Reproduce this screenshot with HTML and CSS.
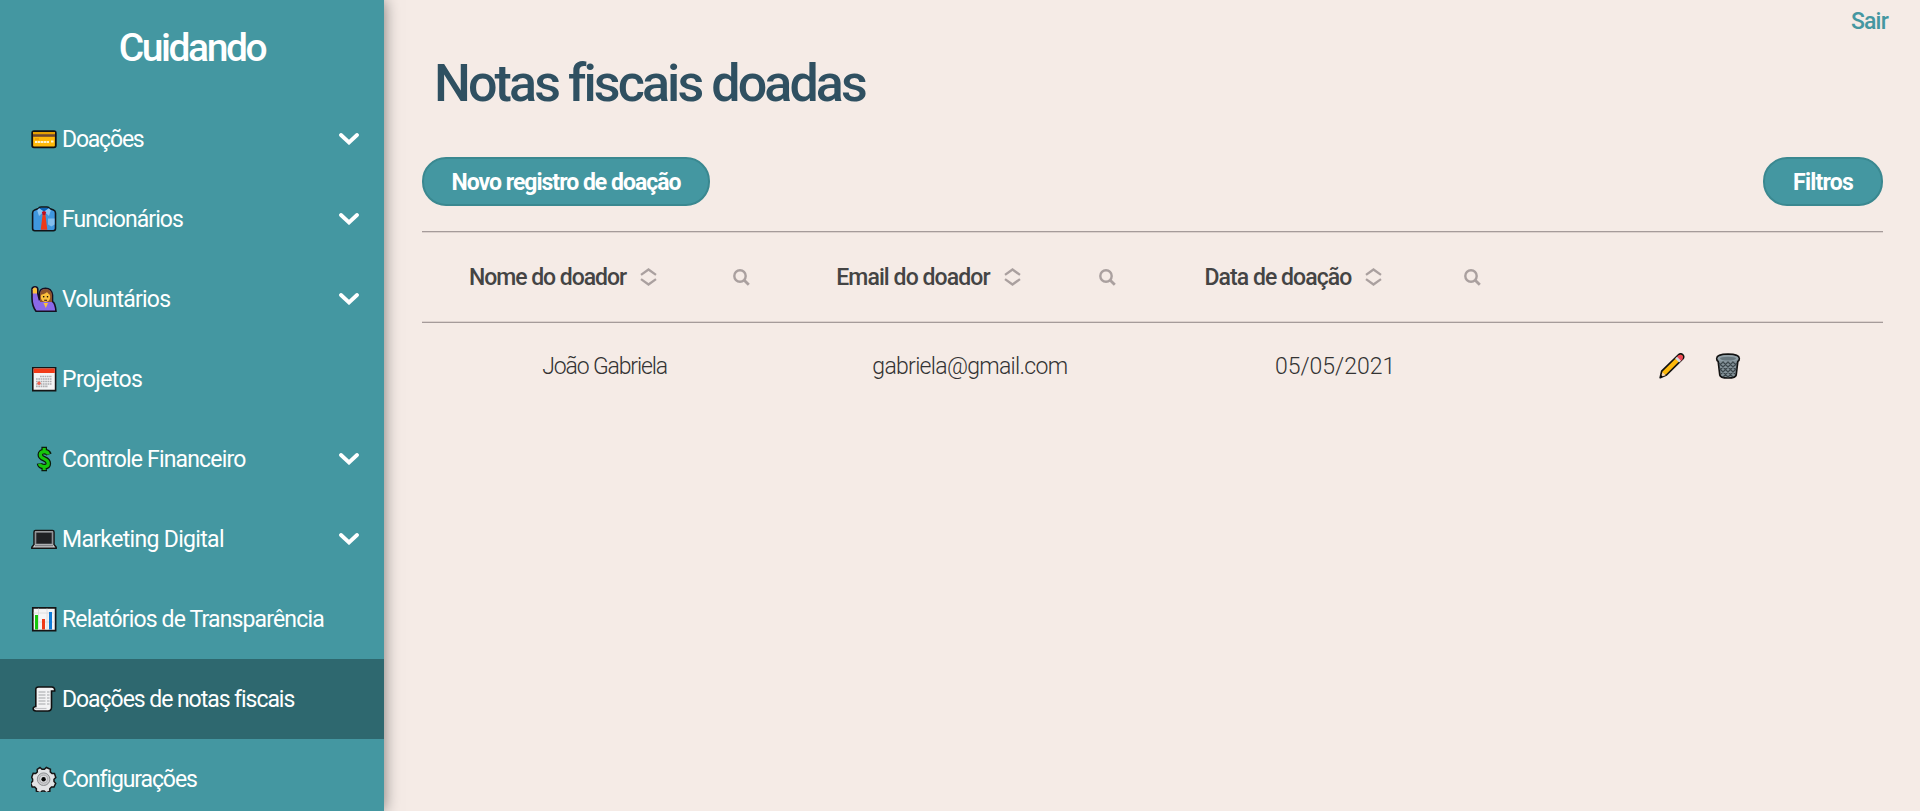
FILE: index.html
```html
<!DOCTYPE html>
<html lang="pt-BR">
<head>
<meta charset="utf-8">
<title>Cuidando</title>
<link rel="stylesheet" href="styles.css">
</head>
<body>
<svg width="0" height="0" class="defs">
  <symbol id="chevron" viewBox="0 0 20 12"><path d="M2 2l8 7.500L18 2" fill="none" stroke="#fff" stroke-width="3.800" stroke-linecap="round" stroke-linejoin="miter"/></symbol>
  <symbol id="sort" viewBox="0 0 17 18"><path d="M1 6.900l7.500-5.400 7.500 5.400M1 11.100l7.500 5.400 7.500-5.400" fill="none" stroke="#aaa09f" stroke-width="2.300"/></symbol>
  <symbol id="search" viewBox="0 0 17 17"><circle cx="7" cy="7" r="5.7" fill="none" stroke="#aaa09f" stroke-width="2.4"/><path d="M11.2 11.2l4.6 4.6" stroke="#aaa09f" stroke-width="2.8"/></symbol>
</svg>
<div class="app">
  <aside class="sidebar">
    <h2 class="brand"><span>Cuidando</span></h2>
    <nav>
      <a class="item"><svg class="ico" viewBox="0 0 26 26"><rect x="1.2" y="5.2" width="23.6" height="16.2" rx="1.8" fill="#ffb90a" stroke="#111" stroke-width="1.8"/><path d="M2 6h22v2H2z" fill="#e8a000"/><path d="M2 8.2h22v2.6H2z" fill="#6d4631"/><path d="M4 13h4" stroke="#e58a00" stroke-width="1"/><path d="M4 16h14M20 15.6h3" stroke="#fff3cf" stroke-width="2" stroke-dasharray="2.5 .5"/></svg><span class="t t1">Doações</span><svg class="chev"><use href="#chevron"/></svg></a>
      <a class="item"><svg class="ico" viewBox="0 0 26 26"><path d="M7.5 2.5Q8 1 10 1h6q2 0 2.500 1.500l4 1.500Q24.500 4.700 24.500 7v15.500q0 2.200-2.200 2.200H3.800q-2.200 0-2.200-2.200V7q0-2.300 2-3z" fill="#3f97df" stroke="#101418" stroke-width="1.6"/><path d="M8 2h10l-5 5z" fill="#0b63b8"/><path d="M8 2.300L6.200 4.500 8 10l5-4.500zM18 2.300l1.800 2.200L18 10l-5-4.500z" fill="#8cc5f2"/><path d="M11.700 8h2.600l2 15.800H9.700z" fill="#ef3a19"/><path d="M10.800 6l2.200-1 2.200 1-1 3h-2.400z" fill="#c00d20"/><path d="M17 12.500h6.500v6l-3.200 2-3.300-2z" fill="#83bdec"/></svg><span class="t t2">Funcionários</span><svg class="chev"><use href="#chevron"/></svg></a>
      <a class="item"><svg class="ico" viewBox="0 0 26 26"><path d="M1 3Q1.500.8 4 .8t2.800 2.400v4.500l1.700 6.500V8q0-5.800 6-5.800T21.500 9v6.500q2.800 1.500 3.500 9.700H5Q1 20 1 12z" fill="#8a69e8" stroke="#151020" stroke-width="1.600"/><path d="M1.800 7.500V3.200Q2.200 1.600 4 1.600T6 3.400v4.100z" fill="#fdc13c"/><path d="M9 16V8.500Q9 3 14.500 3T21 8.500V16z" fill="#8e542b"/><ellipse cx="14.500" cy="11" rx="4.700" ry="5" fill="#fdc13c"/><path d="M10 8.500Q15 8 16 5.500q1 2.500 3.500 3V6q-2-2-5-2t-4.500 2z" fill="#8e542b"/><path d="M12.500 17h4.500l-2.200 5z" fill="#fdc13c"/><circle cx="12.700" cy="10.800" r=".8"/><circle cx="16.500" cy="10.800" r=".8"/><path d="M13.200 13.700h2.800v1.200h-2.800z" fill="#3a2010"/></svg><span class="t t3">Voluntários</span><svg class="chev"><use href="#chevron"/></svg></a>
      <a class="item"><svg class="ico" viewBox="0 0 26 26"><path d="M1.800 1.800h22.800v22.800H1.800z" fill="#f3f3f4" stroke="#151515" stroke-width="1.600"/><path d="M2.600 2.500h21.200V7H2.600z" fill="#f13b18"/><g stroke="#adadb0" stroke-width="1.700" stroke-dasharray="1.700 .6"><path d="M9 10.500h12M5 13h16M5 15.500h16M5 18h16M5 20.300h12"/></g><circle cx="8" cy="17.300" r="1.700" fill="#ee6250"/></svg><span class="t t4">Projetos</span></a>
      <a class="item"><svg class="ico" viewBox="0 0 26 26"><g fill="none" stroke-linejoin="miter"><path d="M18 8.500Q17 5.600 13.300 5.600q-4 0-4 3.100 0 2.500 4 4.200t4 4.500q0 3.200-4.200 3.200-4.100 0-4.600-3.300M13.200.8v4.700M13.200 20.500v4.700" stroke="#0a1a0a" stroke-width="5.600"/><path d="M17.400 8.500Q17 5.600 13.300 5.600q-4 0-4 3.100 0 2.500 4 4.200t4 4.500q0 3.200-4.200 3.200-4.100 0-4.600-2.800M13.200 2v4M13.200 20.500V24" stroke="#16c60c" stroke-width="3.200"/></g></svg><span class="t t5">Controle Financeiro</span><svg class="chev"><use href="#chevron"/></svg></a>
      <a class="item"><svg class="ico" viewBox="0 0 26 26"><path d="M3 18.500V6q0-1.500 1.500-1.500h17Q23 4.500 23 6v12.500l2.200 2.800v1H.8v-1z" fill="#cacbcd" stroke="#151515" stroke-width="1.500"/><path d="M4 5.500h18v13H4z" fill="#909296"/><path d="M5.300 6.700h15.400v11H5.300z" fill="#202124"/><path d="M4 19.700h18" stroke="#77797d" stroke-width="1.200"/></svg><span class="t t6">Marketing Digital</span><svg class="chev"><use href="#chevron"/></svg></a>
      <a class="item"><svg class="ico" viewBox="0 0 26 26"><path d="M1.800 1.800h22.800v22.800H1.800z" fill="#f5f5f6" stroke="#151515" stroke-width="1.700"/><path d="M2.600 7h21M2.600 16h21M7.500 2.600v21M16 2.600v21" stroke="#d8d8da" stroke-width=".8"/><path d="M4 9h3v14.500H4z" fill="#16c60c"/><path d="M11 13h3v10.500h-3z" fill="#f03a17"/><path d="M18 6h3v17.500h-3z" fill="#0f7bd6"/></svg><span class="t t7">Relatórios de Transparência</span></a>
      <a class="item active"><svg class="ico" viewBox="0 0 26 26"><path d="M4.800 20.500V4Q4.500 1 7.500 1h13q3.500 0 3.200 4h-3.200v16.500q-.2 3.500-3.500 3.500H5q-2.800 0-2.800-2.500 0-1.500 2.600-2z" fill="#f3f3f4" stroke="#101010" stroke-width="1.600"/><path d="M7.500 6h7M7.500 9h7M7.500 12h7M7.500 15h7M7.500 18h7M16 6h2.500M16 9h2.500M16 12h2.500M16 15h2.500M16 18h2.500" stroke="#a4a5a8" stroke-width="1.100"/><path d="M4 22.500h11.500" stroke="#c4c4c7" stroke-width="1.200"/></svg><span class="t t8">Doações de notas fiscais</span></a>
      <a class="item"><svg class="ico" viewBox="0 0 26 26"><path d="M9.300 1.500l2 1.800h2.400l2-1.800 4 1.700-.1 2.700 1.700 1.700 2.500-.1 1.300 4-1.800 1.800v2.100l1.700 1.900-1.700 3.800-2.500-.1-1.700 1.700.1 2.500-3.800 1.600-1.900-1.900h-2.100l-1.800 1.900-4-1.700.1-2.400-1.700-1.700-2.500.1-1.500-4 1.900-1.800v-2.100L1 11.300l1.500-4 2.500.2 1.600-1.600-.1-2.600z" transform="translate(-.3 0)" fill="#e2e3e5" stroke="#151515" stroke-width="1.500"/><circle cx="12.600" cy="13.200" r="6.300" fill="#c9cacc" stroke="#8d8f92"/><circle cx="12.600" cy="13.200" r="4" fill="#dcdddf" stroke="#a4a5a8" stroke-width=".8"/><circle cx="12.600" cy="13.200" r="2.200" fill="#050505"/></svg><span class="t t9">Configurações</span></a>
    </nav>
  </aside>
  <main class="main">
    <header class="top"><a class="logout">Sair</a></header>
    <h1 class="title">Notas fiscais doadas</h1>
    <div class="actions"><button class="btn new">Novo registro de doação</button><button class="btn filter">Filtros</button></div>
    <div class="table">
      <div class="row head">
        <div class="cell name"><span>Nome do doador</span><svg class="sort"><use href="#sort"/></svg><svg class="search"><use href="#search"/></svg></div>
        <div class="cell email"><span>Email do doador</span><svg class="sort"><use href="#sort"/></svg><svg class="search"><use href="#search"/></svg></div>
        <div class="cell date"><span>Data de doação</span><svg class="sort"><use href="#sort"/></svg><svg class="search"><use href="#search"/></svg></div>
        <div class="cell"></div>
      </div>
      <div class="row data">
        <div class="cell donor">João Gabriela</div>
        <div class="cell mail">gabriela@gmail.com</div>
        <div class="cell">05/05/2021</div>
        <div class="cell tools">
          <svg class="tool" viewBox="0 0 26 26"><path d="M1.200 24.700l1.500-6.500L19.200 2q2-2 4.200-.6 2.200 2 .6 4.300L7.500 22z" fill="#fdb90b" stroke="#111" stroke-width="1.700" stroke-linejoin="round"/><path d="M17.500 4.500l4 4 2-2.200q1.500-2-.4-4-2-1-3.600.3z" fill="#ef4556"/><path d="M16.200 5.500l1.800-1.700L22 7.700l-1.800 1.800z" fill="#d5dbe0"/><path d="M2.200 23.700l1.300-4.500 3.200 3z" fill="#f5d4b0"/><path d="M1.500 24.500l.6-2.500 1.800 1.800z"/></svg>
          <svg class="tool" viewBox="0 0 26 26"><path d="M1.700 5.500Q2 1.200 13 1.200T24.300 5.500q0 2.500-1.500 3L21.200 22q-.5 3-8.200 3t-8.200-3L3.200 8.500q-1.500-.7-1.500-3z" fill="#839198" stroke="#111" stroke-width="1.700"/><g stroke="#3c474c" stroke-width="1.100"><path d="M4 10l14 14M7.500 8.500L20 21M12 8l9 9M17 8l4.500 4.500M4.500 15.500l8.500 8.500M22 10L8 24M18.500 8.500L6 21M14 8l-9 9M9 8l-4.500 4.500M21.500 15.500L13 24" /></g><ellipse cx="13" cy="5.300" rx="10.500" ry="3.300" fill="#91a0a7"/><ellipse cx="13" cy="5.600" rx="8" ry="1.900" fill="#68777e"/></svg>
        </div>
      </div>
    </div>
  </main>
</div>
</body>
</html>
```

FILE: styles.css
```css
* { box-sizing: border-box; }
body { margin: 0; background: #f5ebe6; font-family: Roboto, sans-serif; color: #444; overflow: hidden; }
.defs { position: absolute; }
.app { display: flex; height: 811px; }
.sidebar { width: 384px; flex: none; background: #4497a1; color: #fff; box-shadow: 0 0 15px rgba(0,0,0,.5); overflow: hidden; }
.brand { margin: 0; height: 99px; padding-top: 25px; text-align: center; font-size: 39px; line-height: 46px; font-weight: 500; letter-spacing: -2.4px; }
.item { display: flex; align-items: center; height: 80px; padding: 0 25px 0 31px; font-size: 23px; }
.active { background: #2e686f; }
.ico { width: 26px; height: 26px; margin-right: 5px; flex: none; }
.t { white-space: nowrap; padding-top: 1px; }
.t1 { letter-spacing: -1.2px; }
.t2 { letter-spacing: -.94px; }
.t3 { letter-spacing: -.76px; }
.t4 { letter-spacing: -.62px; }
.t5 { letter-spacing: -.83px; }
.t6 { letter-spacing: -.67px; }
.t7 { letter-spacing: -.85px; }
.t8 { letter-spacing: -1.05px; }
.t9 { letter-spacing: -1.1px; }
.chev { width: 20px; height: 12px; margin-left: auto; }
.main { flex: 1; padding: 0 37px 0 38px; }
.top { display: flex; justify-content: flex-end; height: 50px; padding: 8px 0; margin-right: -5px; }
.logout { color: #4497a1; font-size: 23px; line-height: 27px; font-weight: 500; letter-spacing: -.8px; }
.title { margin: 0 0 0 12px; height: 107px; padding-top: 1px; font-size: 52px; line-height: 66px; font-weight: 500; letter-spacing: -2.9px; color: #2f5061; }
.actions { display: flex; justify-content: space-between; height: 74px; align-items: flex-start; }
.btn { height: 49px; padding: 1px 0 0; border: 2px solid #3a8890; border-radius: 24px; background: #4497a1; color: #fff; font: 700 23px Roboto, sans-serif; white-space: nowrap; }
.new { width: 288px; letter-spacing: -1px; }
.filter { width: 120px; letter-spacing: -.8px; }
.row { display: grid; grid-template-columns: repeat(4, 1fr); align-items: center; }
.head { height: 92px; border-top: 1px solid #a59b9a; border-bottom: 1px solid #a59b9a; box-shadow: inset 0 1px #ddd2ce, inset 0 -1px #ddd2ce; font-size: 23px; font-weight: 500; }
.head .cell { display: flex; align-items: center; padding-right: 37px; }
.head .name { padding-left: 47px; letter-spacing: -1.05px; }
.head .email { padding-left: 49px; letter-spacing: -.92px; }
.head .date { padding-left: 52px; letter-spacing: -.95px; }
.sort { width: 17px; height: 18px; margin-left: 14px; }
.search { width: 17px; height: 17px; margin-left: auto; }
.data { height: 86px; font-size: 23px; text-align: center; font-weight: 300; color: #333; }
.donor { letter-spacing: -1.15px; }
.mail { letter-spacing: -.7px; }
.tools { display: flex; justify-content: center; gap: 30px; }
.tool { width: 26px; height: 26px; }
```
